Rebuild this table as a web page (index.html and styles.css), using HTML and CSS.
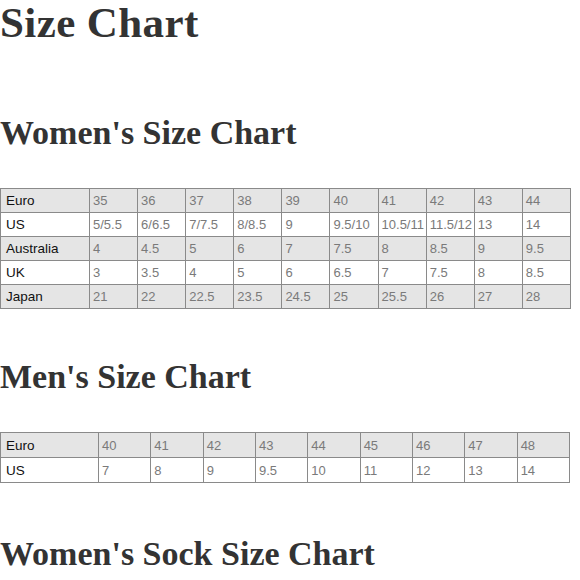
FILE: index.html
```html
<!DOCTYPE html>
<html>
<head>
<meta charset="utf-8">
<link rel="stylesheet" href="styles.css">
</head>
<body>
<h1 class="title">Size Chart</h1>
<h2 class="sub sub-women">Women's Size Chart</h2>
<table class="chart chart-women">
<tr class="shade"><th>Euro</th><td>35</td><td>36</td><td>37</td><td>38</td><td>39</td><td>40</td><td>41</td><td>42</td><td>43</td><td>44</td></tr>
<tr><th>US</th><td>5/5.5</td><td>6/6.5</td><td>7/7.5</td><td>8/8.5</td><td>9</td><td>9.5/10</td><td>10.5/11</td><td>11.5/12</td><td>13</td><td>14</td></tr>
<tr class="shade"><th>Australia</th><td>4</td><td>4.5</td><td>5</td><td>6</td><td>7</td><td>7.5</td><td>8</td><td>8.5</td><td>9</td><td>9.5</td></tr>
<tr><th>UK</th><td>3</td><td>3.5</td><td>4</td><td>5</td><td>6</td><td>6.5</td><td>7</td><td>7.5</td><td>8</td><td>8.5</td></tr>
<tr class="shade"><th>Japan</th><td>21</td><td>22</td><td>22.5</td><td>23.5</td><td>24.5</td><td>25</td><td>25.5</td><td>26</td><td>27</td><td>28</td></tr>
</table>
<h2 class="sub sub-men">Men's Size Chart</h2>
<table class="chart chart-men">
<tr class="shade"><th>Euro</th><td>40</td><td>41</td><td>42</td><td>43</td><td>44</td><td>45</td><td>46</td><td>47</td><td>48</td></tr>
<tr><th>US</th><td>7</td><td>8</td><td>9</td><td>9.5</td><td>10</td><td>11</td><td>12</td><td>13</td><td>14</td></tr>
</table>
<h2 class="sub sub-sock">Women's Sock Size Chart</h2>
</body>
</html>
```
FILE: styles.css
```css
html, body {
  margin: 0;
  padding: 0;
  background: #fff;
  overflow: hidden;
}
.title {
  margin: 0;
  font-family: "Liberation Serif", serif;
  font-weight: bold;
  font-size: 43px;
  line-height: 46px;
  color: #333;
  letter-spacing: 0.4px;
  white-space: nowrap;
}
.sub {
  margin: 0;
  font-family: "Liberation Serif", serif;
  font-weight: bold;
  font-size: 34px;
  line-height: 34px;
  color: #333;
  letter-spacing: 0;
  white-space: nowrap;
}
.sub-women { margin-top: 70px; }
.sub-men { margin-top: 51px; }
.sub-sock { margin-top: 54px; }
.chart {
  border-collapse: collapse;
  table-layout: fixed;
  font-family: "Liberation Sans", Arial, sans-serif;
  font-size: 13px;
  margin-top: 38px;
}
.chart-women { width: 571px; }
.chart-men { width: 570px; }
.chart th, .chart td {
  border: 1px solid #8a8a8a;
  padding: 0 4px;
  text-align: left;
  white-space: nowrap;
  overflow: hidden;
}
.chart th {
  color: #111;
  font-weight: normal;
  font-size: 13.5px;
  padding-left: 5px;
}
.chart td {
  color: #7a7a7a;
  padding-left: 3px;
  padding-right: 0;
}
.chart-women th { width: 79px; }
.chart-women tr { height: 24px; }
.chart-men th { width: 88px; }
.chart-men tr { height: 25px; }
.shade th, .shade td { background: #e5e5e5; }
```
